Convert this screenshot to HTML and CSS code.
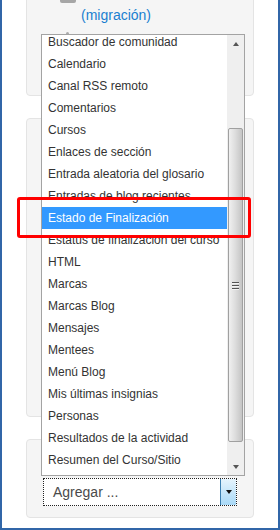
FILE: index.html
```html
<!DOCTYPE html>
<html lang="es">
<head>
<meta charset="utf-8">
<title>Agregar bloque</title>
<link rel="stylesheet" href="styles.css">
</head>
<body>
<div class="frame">
  <div class="col">
    <section class="panel p1">
      <div class="icon"></div>
      <a class="mig">(migración)</a>
      <div class="dot"></div>
    </section>
    <section class="panel p2"></section>
    <section class="panel p3">
      <div class="select">
        <span class="sel-text">Agregar ...</span>
        <span class="sel-btn"><span class="tri-down"></span></span>
      </div>
    </section>
  </div>
  <div class="listbox">
    <ul class="items">
      <li>Buscador de comunidad</li>
      <li>Calendario</li>
      <li>Canal RSS remoto</li>
      <li>Comentarios</li>
      <li>Cursos</li>
      <li>Enlaces de sección</li>
      <li>Entrada aleatoria del glosario</li>
      <li>Entradas de blog recientes</li>
      <li class="sel">Estado de Finalización</li>
      <li>Estatus de finalización del curso</li>
      <li>HTML</li>
      <li>Marcas</li>
      <li>Marcas Blog</li>
      <li>Mensajes</li>
      <li>Mentees</li>
      <li>Menú Blog</li>
      <li>Mis últimas insignias</li>
      <li>Personas</li>
      <li>Resultados de la actividad</li>
      <li>Resumen del Curso/Sitio</li>
    </ul>
    <div class="sbar">
      <div class="sb-btn"><span class="tri-up"></span></div>
      <div class="track">
        <div class="thumb"><i class="g"></i><i class="g"></i><i class="g"></i></div>
      </div>
      <div class="sb-btn"><span class="tri-dn"></span></div>
    </div>
  </div>
  <div class="mark"></div>
</div>
</body>
</html>
```

FILE: styles.css
```css
html, body {
  margin: 0;
  background: #fff;
}
body {
  font-family: "Liberation Sans", Arial, sans-serif;
}
.frame {
  position: relative;
  width: 280px;
  height: 530px;
  box-sizing: border-box;
  border: 2px solid #3166a8;
  border-top: 0;
  overflow: hidden;
  background: #fff;
}
.col {
  display: flex;
  flex-direction: column;
  gap: 22px;
  margin: -14px 24px 0 24px;
}
.panel {
  box-sizing: border-box;
  background: #f5f5f5;
  border: 1px solid #e4e4e4;
  border-radius: 4px;
}
.p1 { height: 110px; }
.p2 { height: 299px; }
.p3 { height: 79px; padding: 38px 0 0 16px; }

.icon {
  margin-left: 33px;
  width: 16px;
  height: 16px;
  background: #a6a6a6;
  border-radius: 0 0 2px 2px;
}
.mig {
  display: block;
  margin: 4px 0 0 54px;
  font-size: 14px;
  line-height: 17px;
  color: #1a7fd0;
}
.dot {
  margin: 8px 0 0 39px;
  width: 3px;
  height: 3px;
  border-radius: 50%;
  background: #aaa;
}

.select {
  display: flex;
  width: 194px;
  height: 28px;
  box-sizing: border-box;
  border: 1px dotted #222;
  background: #fff;
}
.sel-text {
  flex: 1;
  padding-left: 9px;
  font-size: 14px;
  line-height: 26px;
  color: #4a4a4a;
}
.sel-btn {
  width: 15px;
  border-left: 1px solid #3c7fb1;
  background: linear-gradient(#e6f4fd, #a9d9f7);
  display: flex;
  align-items: center;
  justify-content: center;
}
.tri-down, .tri-dn {
  width: 0;
  height: 0;
  border-left: 3.5px solid transparent;
  border-right: 3.5px solid transparent;
  border-top: 4px solid #111;
}
.tri-dn { border-top-color: #555; }
.tri-up {
  width: 0;
  height: 0;
  border-left: 3.5px solid transparent;
  border-right: 3.5px solid transparent;
  border-bottom: 4px solid #555;
}

.listbox {
  position: absolute;
  left: 39px;
  top: 34px;
  width: 204px;
  height: 442px;
  box-sizing: border-box;
  border: 1px solid #a3a3a3;
  background: #fff;
  display: flex;
  overflow: hidden;
}
.items {
  flex: 1;
  margin: -4px 0 0;
  padding: 0;
  list-style: none;
  font-size: 12px;
  color: #333;
}
.items li {
  height: 22px;
  line-height: 22px;
  padding-left: 6px;
  white-space: nowrap;
  overflow: hidden;
}
.items li.sel {
  background: #3399ff;
  color: #fff;
}
.sbar {
  width: 17px;
  flex: none;
  background: #efefef;
  display: flex;
  flex-direction: column;
}
.sb-btn {
  height: 17px;
  flex: none;
  display: flex;
  align-items: center;
  justify-content: center;
}
.track {
  flex: 1;
  padding-top: 76px;
}
.thumb {
  height: 314px;
  margin: 0 1px;
  box-sizing: border-box;
  border: 1px solid #a0a0a0;
  border-radius: 2px;
  background: linear-gradient(to right, #f0f0f0, #dcdcdc 50%, #c4c4c4);
  display: flex;
  flex-direction: column;
  align-items: center;
  justify-content: center;
  gap: 2px;
}
.g {
  display: block;
  width: 7px;
  height: 1px;
  background: #555;
  box-shadow: 0 1px 0 #f4f4f4;
}
.mark {
  position: absolute;
  left: 15px;
  top: 197px;
  width: 234px;
  height: 41px;
  box-sizing: border-box;
  border: 3px solid #f00;
  border-radius: 3px;
}
```
